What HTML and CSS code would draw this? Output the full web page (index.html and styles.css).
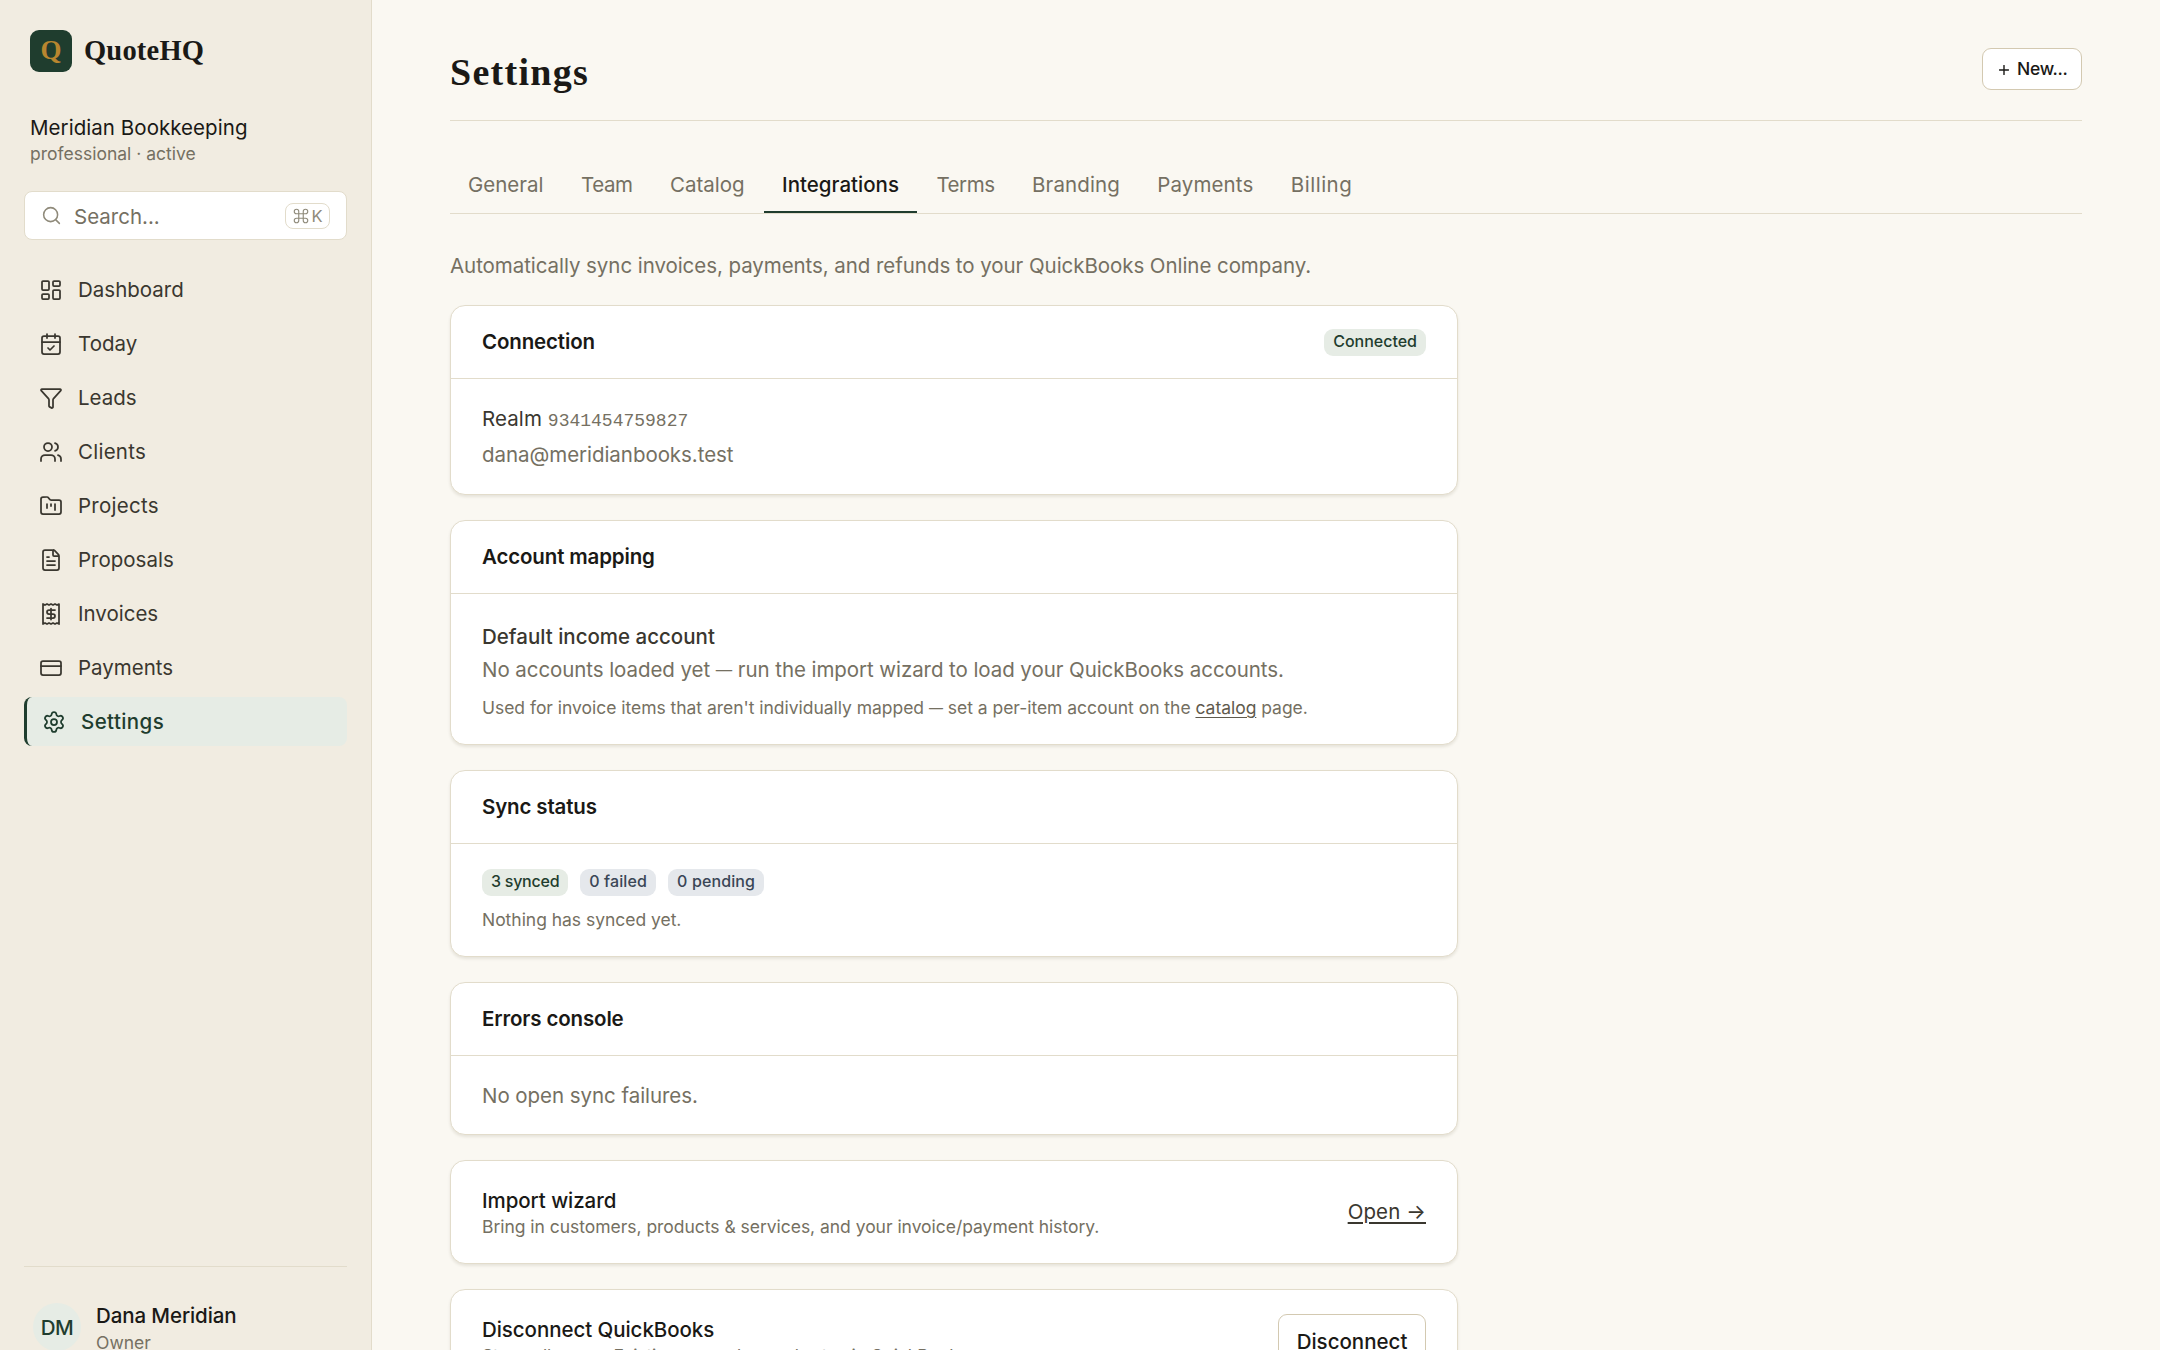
FILE: index.html
```html
<!DOCTYPE html>
<html lang="en">
<head>
<meta charset="utf-8">
<title>Settings · QuoteHQ</title>
<link rel="stylesheet" href="styles.css">
</head>
<body>
<div class="app">
  <aside class="sidebar">
    <div class="brand"><span class="brand-mark">Q</span><span class="brand-name">QuoteHQ</span></div>
    <div class="org">
      <div class="org-name">Meridian Bookkeeping</div>
      <div class="org-plan">professional · active</div>
    </div>
    <div class="search">
      <svg class="search-icon" viewBox="0 0 24 24"><circle cx="11" cy="11" r="8"/><path d="m21 21-4.3-4.3"/></svg>
      <span class="search-label">Search...</span>
      <kbd class="kbd"><svg class="cmd" viewBox="0 0 24 24"><path d="M15 6v12a3 3 0 1 0 3-3H6a3 3 0 1 0 3 3V6a3 3 0 1 0-3 3h12a3 3 0 1 0-3-3"/></svg>K</kbd>
    </div>
    <nav class="nav">
      <a class="nav-item"><svg viewBox="0 0 24 24"><rect width="7" height="9" x="3" y="3" rx="1"/><rect width="7" height="5" x="14" y="3" rx="1"/><rect width="7" height="9" x="14" y="12" rx="1"/><rect width="7" height="5" x="3" y="16" rx="1"/></svg><span>Dashboard</span></a>
      <a class="nav-item"><svg viewBox="0 0 24 24"><path d="M8 2v4M16 2v4"/><rect width="18" height="18" x="3" y="4" rx="2"/><path d="M3 10h18M9 16l2 2 4-4"/></svg><span>Today</span></a>
      <a class="nav-item"><svg viewBox="0 0 24 24"><path d="M10 20a1 1 0 0 0 .553.895l2 1A1 1 0 0 0 14 21v-7a2 2 0 0 1 .517-1.341L21.74 4.67A1 1 0 0 0 21 3H3a1 1 0 0 0-.742 1.67l7.225 7.989A2 2 0 0 1 10 14z"/></svg><span>Leads</span></a>
      <a class="nav-item wide"><svg viewBox="0 0 24 24"><path d="M16 21v-2a4 4 0 0 0-4-4H6a4 4 0 0 0-4 4v2M16 3.128a4 4 0 0 1 0 7.744M22 21v-2a4 4 0 0 0-3-3.87"/><circle cx="9" cy="7" r="4"/></svg><span>Clients</span></a>
      <a class="nav-item wide"><svg viewBox="0 0 24 24"><path d="M4 20h16a2 2 0 0 0 2-2V8a2 2 0 0 0-2-2h-7.93a2 2 0 0 1-1.66-.9l-.82-1.2A2 2 0 0 0 7.93 3H4a2 2 0 0 0-2 2v13c0 1.1.9 2 2 2ZM8 10v4M12 10v2M16 10v6"/></svg><span>Projects</span></a>
      <a class="nav-item"><svg viewBox="0 0 24 24"><path d="M6 22a2 2 0 0 1-2-2V4a2 2 0 0 1 2-2h8a2.4 2.4 0 0 1 1.704.706l3.588 3.588A2.4 2.4 0 0 1 20 8v12a2 2 0 0 1-2 2zM14 2v5a1 1 0 0 0 1 1h5M10 9H8M16 13H8M16 17H8"/></svg><span>Proposals</span></a>
      <a class="nav-item"><svg viewBox="0 0 24 24"><path d="M4 2v20l2-1 2 1 2-1 2 1 2-1 2 1 2-1 2 1V2l-2 1-2-1-2 1-2-1-2 1-2-1-2 1ZM16 8h-6a2 2 0 1 0 0 4h4a2 2 0 1 1 0 4H8M12 17.5v-11"/></svg><span>Invoices</span></a>
      <a class="nav-item"><svg viewBox="0 0 24 24"><rect width="20" height="14" x="2" y="5" rx="2"/><path d="M2 10h20"/></svg><span>Payments</span></a>
      <a class="nav-item active"><svg viewBox="0 0 24 24"><path d="M9.671 4.136a2.34 2.34 0 0 1 4.659 0 2.34 2.34 0 0 0 3.319 1.915 2.34 2.34 0 0 1 2.33 4.033 2.34 2.34 0 0 0 0 3.831 2.34 2.34 0 0 1-2.33 4.033 2.34 2.34 0 0 0-3.319 1.915 2.34 2.34 0 0 1-4.659 0 2.34 2.34 0 0 0-3.32-1.915 2.34 2.34 0 0 1-2.33-4.033 2.34 2.34 0 0 0 0-3.831A2.34 2.34 0 0 1 6.35 6.051a2.34 2.34 0 0 0 3.319-1.915"/><circle cx="12" cy="12" r="3"/></svg><span>Settings</span></a>
    </nav>
    <div class="user">
      <span class="avatar">DM</span>
      <div><div class="user-name">Dana Meridian</div><div class="user-role">Owner</div></div>
    </div>
  </aside>

  <main class="main">
    <header class="page-head">
      <h1>Settings</h1>
      <button class="btn-new"><svg class="plus" viewBox="0 0 10 10"><path d="M5 .5v9M.5 5h9"/></svg><span>New...</span></button>
    </header>
    <div class="tabs">
      <a class="tab">General</a><a class="tab tight">Team</a><a class="tab">Catalog</a><a class="tab current">Integrations</a><a class="tab tight">Terms</a><a class="tab wide">Branding</a><a class="tab wide">Payments</a><a class="tab wider">Billing</a>
    </div>
    <p class="intro">Automatically sync invoices, payments, and refunds to your QuickBooks Online company.</p>
    <div class="cards">
      <section class="card connection">
        <div class="card-head"><h2>Connection</h2><span class="badge ok">Connected</span></div>
        <div class="card-body">
          <p class="line realm">Realm <code>9341454759827</code></p>
          <p class="line muted email">dana@meridianbooks.test</p>
        </div>
      </section>
      <section class="card mapping">
        <div class="card-head"><h2>Account mapping</h2></div>
        <div class="card-body">
          <p class="label">Default income account</p>
          <p class="empty muted">No accounts loaded yet <span class="dash">—</span> run the import wizard to load your QuickBooks accounts.</p>
          <p class="small muted">Used for invoice items that aren't individually mapped <span class="dash">—</span> set a per-item account on the <a class="link inline">catalog</a> page.</p>
        </div>
      </section>
      <section class="card sync">
        <div class="card-head"><h2>Sync status</h2></div>
        <div class="card-body">
          <div class="badges"><span class="badge ok count">3 synced</span><span class="badge neutral">0 failed</span><span class="badge neutral">0 pending</span></div>
          <p class="small muted">Nothing has synced yet.</p>
        </div>
      </section>
      <section class="card errors">
        <div class="card-head"><h2>Errors console</h2></div>
        <div class="card-body"><p class="line muted">No open sync failures.</p></div>
      </section>
      <section class="card action">
        <div><p class="action-title">Import wizard</p><p class="small muted">Bring in customers, products &amp; services, and your invoice/payment history.</p></div>
        <a class="link open">Open →</a>
      </section>
      <section class="card action">
        <div><p class="action-title">Disconnect QuickBooks</p><p class="small muted stops">Stops all syncs. Existing synced records stay in QuickBooks.</p></div>
        <button class="btn">Disconnect</button>
      </section>
    </div>
  </main>
</div>
</body>
</html>
```
FILE: styles.css
```css
* { box-sizing: border-box; }
html, body { margin: 0; height: 100%; overflow: hidden; }
body { background: #faf8f2; color: #1a1916; font-family: Inter, "Liberation Sans", sans-serif; font-size: 20.5px; line-height: 30px; }
h1, h2, p { margin: 0; font-weight: inherit; font-size: inherit; }
svg { fill: none; stroke: currentColor; stroke-width: 1.75; stroke-linecap: round; stroke-linejoin: round; flex: none; }
button { font: inherit; color: inherit; }
.app { display: flex; height: 1350px; }

.sidebar { width: 372px; flex: none; background: #f1ece1; border-right: 1px solid #e2dccb; padding: 30px 24px 0; display: flex; flex-direction: column; }
.brand { display: flex; align-items: center; gap: 12px; padding-left: 6px; height: 42px; }
.brand-mark { width: 42px; height: 42px; border-radius: 9px; background: #1f3d2e; color: #b8862f; font: bold 27px/41px "Liberation Serif", serif; text-align: center; }
.brand-name { font: bold 28.5px/42px "Liberation Serif", serif; letter-spacing: .2px; }
.org { padding: 41px 0 0 6px; height: 119px; }
.org-name { height: 29px; letter-spacing: .05px; }
.org-plan { font-size: 17.5px; line-height: 24px; color: #757062; }
.search { display: flex; align-items: center; height: 49px; flex: none; background: #fff; border: 1px solid #e2dccb; border-radius: 8px; padding: 0 16px; color: #757062; }
.search-icon { width: 21px; height: 21px; stroke: #8f8a7a; }
.search-label { margin-left: 12px; flex: 1; padding-top: 2px; }
.kbd { display: flex; align-items: center; justify-content: center; gap: 1px; width: 45px; height: 26px; border: 1px solid #e2dccb; border-radius: 8px; color: #8f8a7a; font: 16.5px/24px Inter, sans-serif; }
.cmd { width: 18px; height: 18px; stroke-width: 1.5; }
.nav { padding-top: 25px; display: flex; flex-direction: column; gap: 5px; }
.nav-item { display: flex; align-items: center; height: 49px; gap: 15px; padding-left: 15px; border-radius: 8px; color: #3a372f; }
.nav-item.wide { letter-spacing: .25px; }
.nav-item svg { width: 24px; height: 24px; }
.nav-item.active { background: #e6ece5; color: #1f3d2e; border-left: 3px solid #1f3d2e; font-weight: 500; letter-spacing: .4px; }
.user { margin-top: auto; flex: none; height: 84px; border-top: 1px solid #e2dccb; display: flex; padding: 36px 0 0 9px; gap: 15px; }
.avatar { width: 48px; height: 48px; border-radius: 50%; background: #e6ece5; color: #1f3d2e; font-weight: 500; line-height: 50px; text-align: center; flex: none; letter-spacing: -.5px; }
.user-name { font-weight: 500; height: 30px; margin-top: -2px; letter-spacing: -.1px; }
.user-role { font-size: 17.5px; line-height: 24px; color: #757062; }

.main { flex: 1; padding: 48px 78px 0; }
.page-head { display: flex; justify-content: space-between; align-items: flex-start; height: 73px; border-bottom: 1px solid #e2dccb; }
h1 { font: bold 38px/48px "Liberation Serif", serif; letter-spacing: 1.3px; }
.btn-new { display: flex; align-items: center; gap: 8px; height: 42px; width: 100px; background: #fff; border: 1px solid #d3c9b1; border-radius: 9px; font-weight: 500; font-size: 17.5px; padding: 0 0 0 16px; letter-spacing: -.3px; }
.plus { width: 10px; height: 10px; stroke-width: 1.4; margin-top: 1px; }
.tabs { display: flex; gap: 1.5px; height: 93px; padding-top: 41px; border-bottom: 1px solid #e2dccb; }
.tab { padding: 8px 18px 0; color: #757062; height: 51px; }
.tab.tight { letter-spacing: -.45px; }
.tab.wide { letter-spacing: .1px; }
.tab.wider { letter-spacing: .5px; }
.tab.current { color: #1a1916; font-weight: 500; border-bottom: 2px solid #1f3d2e; }
.intro { padding-top: 37px; height: 91px; color: #757062; letter-spacing: -.06px; }
.cards { width: 1008px; display: flex; flex-direction: column; gap: 25px; }
.card { background: #fff; border: 1px solid #e2dccb; border-radius: 15px; box-shadow: 0 2px 3px rgba(60, 50, 20, .1); flex: none; }
.card-head { display: flex; justify-content: space-between; align-items: center; height: 73px; padding: 0 31px; border-bottom: 1px solid #e2dccb; }
h2 { font-weight: 600; letter-spacing: -.15px; }
.badge { display: inline-block; height: 27px; padding: 0 9px; border-radius: 9px; font-size: 16px; line-height: 25px; font-weight: 500; }
.badge.ok { background: #e6ece5; color: #1f3d2e; }
.badge.count { letter-spacing: -.25px; }
.badge.neutral { background: #e5e8ec; color: #3a4656; letter-spacing: .12px; }
.card-body { padding: 25px 31px 0; color: #3a372f; }
.card-body .muted, .muted { color: #757062; }
.small { font-size: 17.5px; line-height: 27px; letter-spacing: -.03px; }
.dash { font-size: .8em; line-height: 0; vertical-align: 1px; }
.connection { height: 190px; }
.line { line-height: 36px; letter-spacing: -.05px; }
.realm { margin-top: -3px; letter-spacing: .1px; }
code { font: 18px "Liberation Mono", monospace; color: #757062; letter-spacing: 0; }
.mapping { height: 225px; }
.mapping .card-body { padding-top: 28px; }
.label { font-weight: 500; }
.empty { line-height: 34px; margin-top: 1px; letter-spacing: -.07px; }
.mapping .small { margin-top: 7px; }
.sync { height: 187px; }
.badges { display: flex; gap: 12px; }
.sync .small { margin-top: 10px; }
.errors { height: 153px; }
.errors .card-body { padding-top: 22px; }
.action { height: 104px; display: flex; justify-content: space-between; padding: 25px 31px 0; }
.action-title { font-weight: 500; height: 27px; letter-spacing: -.06px; }
.stops { letter-spacing: -.15px; }
.link { text-decoration: underline; text-underline-offset: 3px; color: #3a372f; }
.link.inline { color: #5f5a4d; }
.open { height: 37px; margin-top: 11px; letter-spacing: .12px; }
.btn { height: 54px; width: 148px; background: #fff; border: 1px solid #d3c9b1; border-radius: 9px; font-weight: 500; padding: 2px 0 0; margin-top: -1px; }
```
